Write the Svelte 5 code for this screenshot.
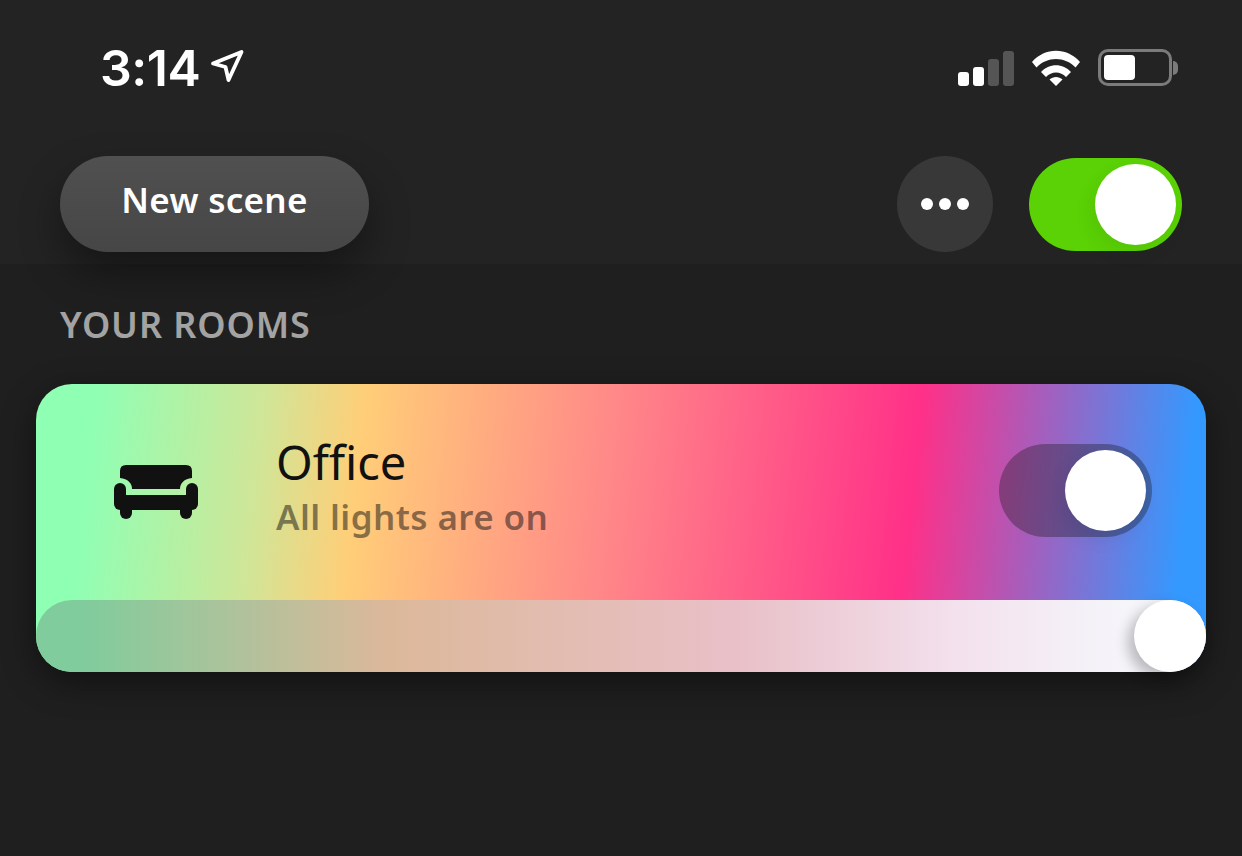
<script>
	let rooms = [{ name: 'Office', status: 'All lights are on' }];
</script>

<div class="screen">
	<header class="top">
		<div class="status-bar">
			<div class="time">
				<span>3:14</span>
				<svg class="location" viewBox="0 0 34 34" width="34" height="34" fill="none" stroke="#fff" stroke-width="3.8" stroke-linejoin="round">
					<path d="M3 14.500 L31.500 3 L18.500 31 L15.500 18 Z"></path>
				</svg>
			</div>
			<div class="indicators">
				<div class="signal">
					<span class="bar on" style="height: 14px"></span>
					<span class="bar on" style="height: 19px"></span>
					<span class="bar" style="height: 27px"></span>
					<span class="bar" style="height: 35px"></span>
				</div>
				<svg class="wifi" viewBox="0 0 48 36" width="48" height="36" fill="#fff">
					<path d="M0 12 C13 -3 35 -3 48 12 L43.5 17.5 C33 6 15 6 4.500 17.500 Z"></path>
					<path d="M9 22 C17 13 31 13 39 22 L34 27 C28.500 21 19.500 21 14 27 Z"></path>
					<path d="M17.500 29.500 C21 26 27 26 30.500 29.500 L24 36 Z"></path>
				</svg>
				<div class="battery">
					<div class="shell"><span class="level"></span></div>
					<span class="cap"></span>
				</div>
			</div>
		</div>
		<div class="actions">
			<button class="new-scene">New scene</button>
			<div class="actions-right">
				<button class="more" aria-label="More">
					<span></span><span></span><span></span>
				</button>
				<div class="toggle green"><span class="knob"></span></div>
			</div>
		</div>
	</header>

	<main class="rooms">
		<h2>YOUR ROOMS</h2>
		{#each rooms as room}
			<section class="card">
				<div class="card-main">
					<svg class="sofa" viewBox="0 0 84 54" width="84" height="54" fill="#111">
						<path d="M6 6 Q6 0 12 0 H72 Q78 0 78 6 V13 C70 14 66 18 66 24 H18 C18 18 14 14 6 13 Z"></path>
						<rect x="0" y="18" width="12" height="27" rx="6"></rect>
						<rect x="72" y="18" width="12" height="27" rx="6"></rect>
						<rect x="10" y="30" width="64" height="15"></rect>
						<rect x="6" y="38" width="12" height="16" rx="6"></rect>
						<rect x="66" y="38" width="12" height="16" rx="6"></rect>
					</svg>
					<div class="room-text">
						<div class="room-name">{room.name}</div>
						<div class="room-status">{room.status}</div>
					</div>
					<div class="toggle dim"><span class="knob"></span></div>
				</div>
				<div class="slider"><span class="thumb"></span></div>
			</section>
		{/each}
	</main>
</div>

<style>
	:global(body) {
		background: #1f1f1f;
	}

	.screen {
		width: 1242px;
		height: 856px;
		overflow: hidden;
		background: #1f1f1f;
		font-family: "Noto Sans", sans-serif;
	}

	.top {
		height: 264px;
		background: #232323;
		box-sizing: border-box;
		padding: 0 60px;
	}

	.status-bar {
		height: 156px;
		display: flex;
		justify-content: space-between;
		align-items: flex-start;
	}

	.time {
		display: flex;
		align-items: center;
		gap: 10px;
		margin: 40px 0 0 40px;
		height: 56px;
		font-family: Inter, sans-serif;
		font-size: 50px;
		font-weight: 600;
		letter-spacing: -0.5px;
		color: #fff;
	}

	.location {
		margin-top: -4px;
	}

	.indicators {
		display: flex;
		align-items: center;
		gap: 18px;
		margin: 49px 4px 0 0;
	}

	.signal {
		display: flex;
		align-items: flex-end;
		gap: 4px;
		height: 36px;
	}

	.bar {
		width: 11px;
		border-radius: 3px;
		background: #555;
	}

	.bar.on {
		background: #fff;
	}

	.battery {
		display: flex;
		align-items: center;
		gap: 1px;
	}

	.shell {
		width: 74px;
		height: 37px;
		box-sizing: border-box;
		border: 3px solid #7b7b7b;
		border-radius: 10px;
		padding: 3px;
	}

	.level {
		display: block;
		width: 31px;
		height: 25px;
		background: #fff;
		border-radius: 4px;
	}

	.cap {
		width: 5px;
		height: 14px;
		background: #7b7b7b;
		border-radius: 0 7px 7px 0;
	}

	.actions {
		display: flex;
		justify-content: space-between;
		align-items: center;
		height: 96px;
	}

	.actions-right {
		display: flex;
		align-items: center;
		gap: 36px;
	}

	button {
		border: none;
		padding: 0;
		font-family: inherit;
	}

	.new-scene {
		width: 309px;
		height: 96px;
		border-radius: 48px;
		background: linear-gradient(180deg, #505050, #464646);
		box-shadow: 0 20px 40px rgba(0, 0, 0, 0.38);
		color: #fff;
		font-size: 35px;
		font-weight: 600;
		letter-spacing: 0.3px;
		padding-bottom: 10px;
	}

	.more {
		width: 96px;
		height: 96px;
		border-radius: 50%;
		background: #383838;
		display: flex;
		align-items: center;
		justify-content: center;
		gap: 6px;
	}

	.more span {
		width: 12px;
		height: 12px;
		border-radius: 50%;
		background: #fff;
	}

	.toggle {
		width: 153px;
		height: 93px;
		border-radius: 47px;
		display: flex;
		align-items: center;
		justify-content: flex-end;
		box-sizing: border-box;
		padding-right: 6px;
	}

	.toggle.green {
		background: #5ad205;
	}

	.toggle.dim {
		background: rgba(20, 20, 20, 0.34);
		margin-top: -4px;
	}

	.knob {
		width: 81px;
		height: 81px;
		border-radius: 50%;
		background: #fff;
		box-shadow: -4px 8px 20px rgba(0, 0, 0, 0.07);
	}

	.rooms {
		padding: 0 36px;
	}

	h2 {
		margin: 0;
		height: 120px;
		padding: 37px 0 0 24px;
		box-sizing: border-box;
		font-size: 36px;
		line-height: 48px;
		font-weight: 600;
		letter-spacing: 0.9px;
		color: #a3a3a3;
	}

	.card {
		width: 1170px;
		height: 288px;
		border-radius: 36px;
		background: linear-gradient(96deg, #8fffb4 5%, #cfe698 19%, #ffce78 27.500%, #ff8a88 48%, #ff3088 74%, #3399ff 97%);
		box-shadow: 0 10px 34px rgba(0, 0, 0, 0.45);
		display: flex;
		flex-direction: column;
	}

	.card-main {
		height: 216px;
		display: flex;
		align-items: center;
		padding: 0 54px 0 78px;
		box-sizing: border-box;
	}

	.sofa {
		margin-top: -1px;
	}

	.room-text {
		flex: 1;
		margin-left: 78px;
		margin-top: -12px;
	}

	.room-name {
		font-size: 47px;
		line-height: 60px;
		color: #111;
	}

	.room-status {
		margin-top: 2px;
		font-size: 35px;
		line-height: 46px;
		font-weight: 600;
		letter-spacing: 0.4px;
		color: rgba(17, 17, 17, 0.5);
	}

	.slider {
		height: 72px;
		border-radius: 36px;
		background: linear-gradient(90deg, #80cc9c 4%, #dcb89a 30%, #e9c0c8 60%, #f3e3ef 80%, #f5f5fa 93%);
		display: flex;
		justify-content: flex-end;
	}

	.thumb {
		width: 72px;
		height: 72px;
		border-radius: 50%;
		background: #fff;
		box-shadow: -6px 6px 14px rgba(0, 0, 0, 0.25);
	}
</style>
